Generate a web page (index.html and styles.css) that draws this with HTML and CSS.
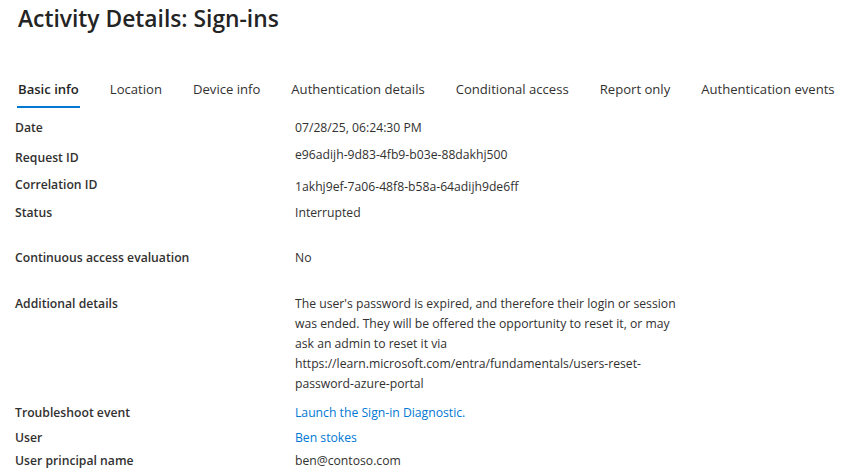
FILE: index.html
```html
<!DOCTYPE html>
<html lang="en">
<head>
<meta charset="utf-8">
<title>Activity Details: Sign-ins</title>
<link rel="stylesheet" href="styles.css">
</head>
<body>
<div class="page">
  <h1 class="title">Activity Details: Sign-ins</h1>
  <nav class="tabs">
    <span class="tab active">Basic info</span>
    <span class="tab">Location</span>
    <span class="tab">Device info</span>
    <span class="tab">Authentication details</span>
    <span class="tab">Conditional access</span>
    <span class="tab">Report only</span>
    <span class="tab">Authentication events</span>
  </nav>
  <div class="details">
    <div class="row g-date"><div class="label">Date</div><div class="value">07/28/25, 06:24:30 PM</div></div>
    <div class="row g-10"><div class="label">Request ID</div><div class="value v-up">e96adijh-9d83-4fb9-b03e-88dakhj500</div></div>
    <div class="row g-7"><div class="label">Correlation ID</div><div class="value v-down">1akhj9ef-7a06-48f8-b58a-64adijh9de6ff</div></div>
    <div class="row g-6"><div class="label">Status</div><div class="value">Interrupted</div></div>
    <div class="row g-25"><div class="label">Continuous access evaluation</div><div class="value">No</div></div>
    <div class="row g-26"><div class="label">Additional details</div><div class="value para">The user's password is expired, and therefore their login or session was ended. They will be offered the opportunity to reset it, or may ask an admin to reset it via https://learn.microsoft.com/entra/fundamentals/users-reset-password-azure-portal</div></div>
    <div class="row g-9"><div class="label">Troubleshoot event</div><div class="value"><a class="link" href="#">Launch the Sign-in Diagnostic.</a></div></div>
    <div class="row g-5"><div class="label">User</div><div class="value"><a class="link" href="#">Ben stokes</a></div></div>
    <div class="row g-3"><div class="label">User principal name</div><div class="value">ben@contoso.com</div></div>
  </div>
</div>
</body>
</html>
```
FILE: styles.css
```css
html, body {
  margin: 0;
  padding: 0;
  background: #ffffff;
}

body {
  font-family: "Open Sans", "Noto Sans", sans-serif;
  color: #323130;
}

.page {
  padding: 0 0 0 15px;
}

.title {
  margin: 5px 0 0 3px;
  font-size: 22.8px;
  line-height: 28px;
  font-weight: 600;
  color: #242424;
  letter-spacing: 0;
}

.tabs {
  display: flex;
  gap: 29px;
  margin-top: 46px;
  padding-left: 2px;
}

.tab {
  font-size: 13.1px;
  line-height: 20px;
  padding: 0 1px 7px;
  border-bottom: 2px solid transparent;
  color: #323130;
  white-space: nowrap;
}

.tab.active {
  font-weight: 600;
  color: #242424;
  border-bottom-color: #0078d4;
}

.details {
  display: flex;
  flex-direction: column;
}

.row {
  display: grid;
  grid-template-columns: 280px 392px;
  font-size: 12.2px;
  line-height: 20px;
}

.g-date { margin-top: 10px; }
.g-3 { margin-top: 3px; }
.g-5 { margin-top: 5px; }
.g-6 { margin-top: 6px; }
.g-7 { margin-top: 7px; }
.g-9 { margin-top: 9px; }
.g-10 { margin-top: 10px; }
.g-25 { margin-top: 25px; }
.g-26 { margin-top: 26px; }

.label {
  font-weight: 600;
  color: #323130;
  white-space: nowrap;
}

.value {
  color: #323130;
}

.v-up { margin-top: -3px; }
.v-down { margin-top: 2px; }

.para {
  overflow-wrap: break-word;
}

.link {
  color: #0078d4;
  text-decoration: none;
}
```
